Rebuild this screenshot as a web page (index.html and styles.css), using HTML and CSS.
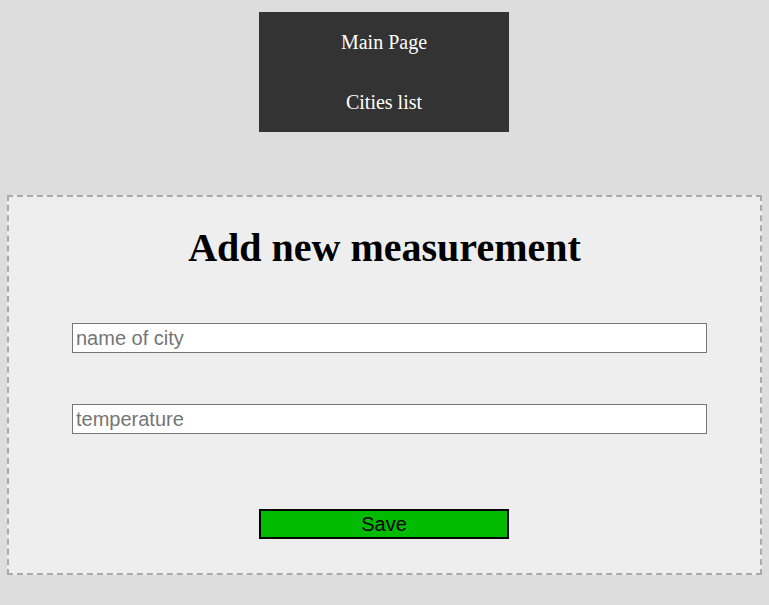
FILE: index.html
```html
<!DOCTYPE html>
<html>
<head>
<meta charset="utf-8">
<link rel="stylesheet" href="styles.css">
</head>
<body>
<nav class="nav">
  <a class="nav-item" href="#">Main Page</a>
  <a class="nav-item" href="#">Cities list</a>
</nav>
<form class="panel">
  <h1 class="title">Add new measurement</h1>
  <input class="field field-city" type="text" placeholder="name of city">
  <input class="field field-temp" type="text" placeholder="temperature">
  <button class="save" type="button">Save</button>
</form>
</body>
</html>
```
FILE: styles.css
```css
html, body {
  margin: 0;
  padding: 0;
  background: #dddddd;
}
body {
  padding: 12px 1px 0 0;
  font-family: "Liberation Serif", "Times New Roman", serif;
}
.nav {
  width: 250px;
  margin: 0 auto;
  background: #333333;
  display: flex;
  flex-direction: column;
}
.nav-item {
  display: block;
  height: 60px;
  line-height: 60px;
  text-align: center;
  color: #ffffff;
  text-decoration: none;
  font-size: 20px;
}
.panel {
  margin: 63px 6px 0 7px;
  border: 2px dashed #aaaaaa;
  background: #eeeeee;
  display: flex;
  flex-direction: column;
  padding: 0 0 34px 0;
}
.title {
  margin: 28px 0 0 0;
  text-align: center;
  font-size: 40px;
  line-height: 46px;
  font-weight: bold;
  color: #000;
}
.field {
  box-sizing: border-box;
  width: 635px;
  height: 30px;
  margin-left: 63px;
  border: 1px solid #767676;
  background: #fff;
  padding: 1px 3px;
  font-family: "Liberation Sans", Arial, sans-serif;
  font-size: 20px;
  color: #000;
  outline: none;
}
.field::placeholder {
  color: #757575;
}
.field-city {
  margin-top: 52px;
}
.field-temp {
  margin-top: 51px;
}
.save {
  box-sizing: border-box;
  align-self: flex-start;
  width: 250px;
  height: 30px;
  margin: 75px 0 0 250px;
  border: 2px solid #000;
  background: #00bb00;
  font-family: "Liberation Sans", Arial, sans-serif;
  font-size: 20px;
  color: #000;
  padding: 0;
}
```
